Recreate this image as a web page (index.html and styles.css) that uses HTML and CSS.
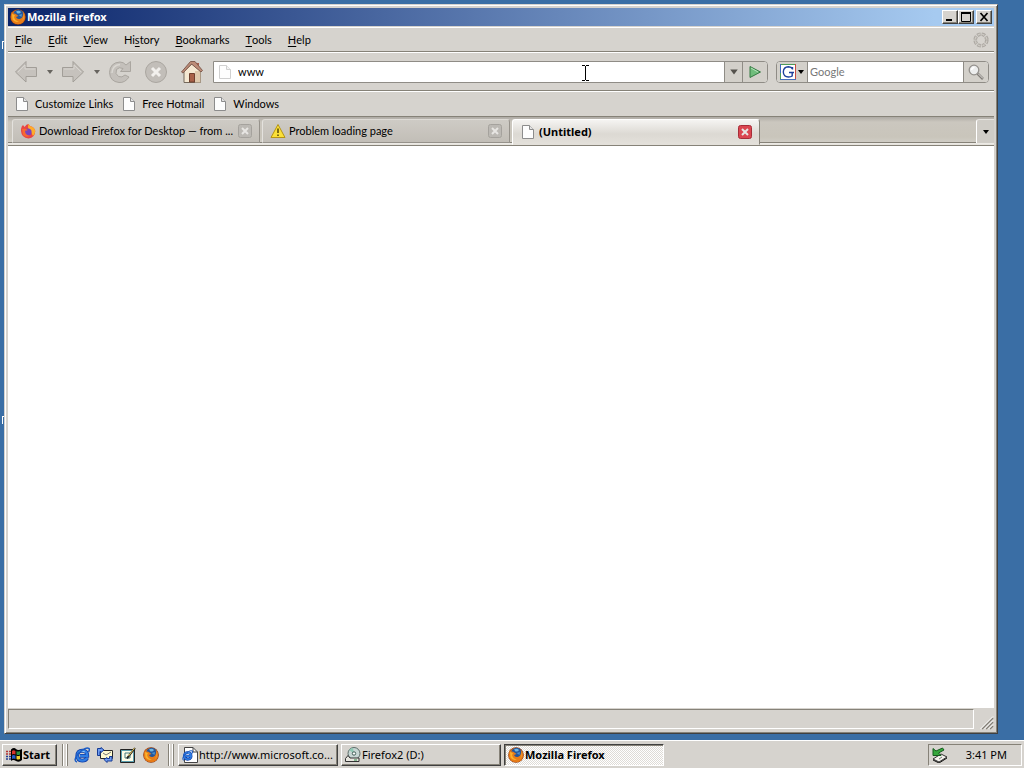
FILE: index.html
```html
<!DOCTYPE html>
<html lang="en">
<head>
    <meta charset="UTF-8">
    <meta name="viewport" content="width=device-width, initial-scale=1.0">
    <title>Mozilla Firefox</title>
    <link rel="stylesheet" href="styles.css">
</head>
<body>
    <!-- shared icons -->
    <svg class="defs" aria-hidden="true">
        <symbol id="firefox" viewBox="0 0 16 16">
            <circle cx="8" cy="8" r="7.8" fill="#8a3a10"/>
            <circle cx="8" cy="8" r="7.300" fill="#e0701a"/>
            <circle cx="8.6" cy="6.6" r="5.8" fill="#24569c"/>
            <path d="M6 2.500 Q9 1 11 3 Q10 5 7.500 4.500 Z" fill="#6fb6e0"/>
            <path d="M8.500 6 L12 5 L11.500 8 Z" fill="#4a92cc"/>
            <path d="M1.500 3 L3.500 4.500 Q5 4 6.500 5.500 L8.500 7 L6 8 Q7 10.500 9.500 10 Q12.500 9.500 13 6 Q13.500 4 12.500 2.500 Q15.500 5.500 15 9 Q13.500 15 8 15 Q2 14.500 1 9 Z" fill="#e67c18"/>
            <path d="M2 5 Q3.500 5 5 6.500 L4 8 Q5 12 9 12.500 Q5 14 2.500 10.500 Z" fill="#fbb22c"/>
            <path d="M13.500 5 Q15 9 11.500 12.500 Q14.500 9 13.500 5 Z" fill="#fde46a"/>
        </symbol>
        <symbol id="page" viewBox="0 0 16 16">
            <path d="M2.500 1.500 H9.500 L13.500 5.500 V14.500 H2.500 Z" fill="#fdfdfd" stroke="#8c8c8c"/>
            <path d="M9.500 1.500 V5.500 H13.500" fill="#e4e4e4" stroke="#8c8c8c"/>
        </symbol>
        <symbol id="ie" viewBox="0 0 16 16">
            <path d="M13.200 10.800 Q11.800 13.600 8.300 13.600 Q3.300 13.300 3.300 8.500 Q3.600 3.800 8.300 3.600 Q13.400 3.800 13.300 8.900 H6" fill="none" stroke="#123fa8" stroke-width="3.800"/>
            <path d="M13.200 10.800 Q11.800 13.600 8.300 13.600 Q3.300 13.300 3.300 8.500 Q3.600 3.800 8.300 3.600 Q13.400 3.800 13.300 8.900 H6" fill="none" stroke="#2f7ee4" stroke-width="2.200"/>
            <path d="M5 5 Q8 2.800 11 5" fill="none" stroke="#8ac8fb"/>
            <path d="M3 15 Q-1 14 3.500 7.500 Q11 -0.500 15 1.500 Q16 2.500 14.500 5" fill="none" stroke="#1c5cc4" stroke-width="1.500"/>
        </symbol>
        <symbol id="close" viewBox="0 0 14 14">
            <rect class="box" x="0.500" y="0.500" width="13" height="13" rx="2"/>
            <path class="cross" d="M4 4 L10 10 M10 4 L4 10"/>
        </symbol>
        <symbol id="down" viewBox="0 0 8 8">
            <path d="M1 2 H7 L4 6 Z" fill="currentColor"/>
        </symbol>
    </svg>

    <main class="desktop">
        <i class="shortcut-edge first"></i>
        <i class="shortcut-edge second"></i>

        <section class="window">
            <header class="titlebar">
                <svg class="icon"><use href="#firefox"/></svg>
                <h1>Mozilla Firefox</h1>
                <button class="win-btn" aria-label="Minimize"><svg viewBox="0 0 10 10"><path d="M1 8 H7" stroke="#000" stroke-width="2"/></svg></button>
                <button class="win-btn" aria-label="Maximize"><svg viewBox="0 0 10 10"><path d="M0.500 1 V9.500 H9.500 V1" fill="none" stroke="#000"/><path d="M0 1 H10" stroke="#000" stroke-width="2"/></svg></button>
                <button class="win-btn win-close" aria-label="Close"><svg viewBox="0 0 10 10"><path d="M1.500 1 L8.500 9 M8.500 1 L1.500 9" stroke="#000" stroke-width="1.700"/></svg></button>
            </header>

            <nav class="menubar">
                <button><u>F</u>ile</button>
                <button><u>E</u>dit</button>
                <button><u>V</u>iew</button>
                <button>Hi<u>s</u>tory</button>
                <button><u>B</u>ookmarks</button>
                <button><u>T</u>ools</button>
                <button><u>H</u>elp</button>
                <svg class="throbber" viewBox="0 0 16 16"><circle cx="8" cy="8" r="5.800" fill="none" stroke="#aaa6a0" stroke-width="3.600" stroke-dasharray="3.400 1.155"/><circle cx="8" cy="8" r="5.800" fill="none" stroke="#ccc8c2" stroke-width="1.600" stroke-dasharray="2.400 2.155" stroke-dashoffset="-0.500"/></svg>
            </nav>

            <div class="toolbar">
                <button class="tool" aria-label="Back"><svg viewBox="0 0 24 24"><path d="M1.500 12 L12 1.500 V7.500 H22.500 V16.500 H12 V22 Z" fill="#c6c2bd" stroke="#a29e98"/><path d="M4 12 L11 5 V9 H21" fill="none" stroke="#d8d5d0"/></svg></button>
                <button class="history" aria-label="Back history"><svg><use href="#down"/></svg></button>
                <button class="tool" aria-label="Forward"><svg viewBox="0 0 24 24"><path d="M22.500 12 L12 1.500 V7.500 H1.500 V16.500 H12 V22 Z" fill="#c6c2bd" stroke="#a29e98"/><path d="M3 9 H13 V5 L20 12" fill="none" stroke="#d8d5d0"/></svg></button>
                <button class="history" aria-label="Forward history"><svg><use href="#down"/></svg></button>
                <button class="tool" aria-label="Reload"><svg viewBox="0 0 24 24"><path d="M18 5 L22.500 1.500 V11.500 H12.500 L15 8.500 Q11 6.500 8.500 9.500 Q6.500 14 10.500 16.500 Q14 18 17 15 L21 17 Q17 23 11 22.500 Q2 21.500 1.500 12.500 Q2 2.500 12 2 Q15.500 2 18 5 Z" fill="#c4c0bb" stroke="#aaa6a0"/><path d="M4 13 Q4.500 5 12 4.500" fill="none" stroke="#dad7d2" stroke-width="1.500"/></svg></button>
                <button class="tool stop" aria-label="Stop"><svg viewBox="0 0 24 24"><circle cx="12" cy="12" r="10.500" fill="#c2beb9" stroke="#aaa6a0"/><path d="M8 8 L16 16 M16 8 L8 16" stroke="#f2f0ed" stroke-width="3"/></svg></button>
                <button class="tool home" aria-label="Home"><svg viewBox="0 0 24 24"><path d="M16 3 H19 V8 H16 Z" fill="#a86050"/><path d="M4 11 L12 4 L20.500 11 V22.500 H4 Z" fill="#f5e8d2" stroke="#75695c"/><path d="M15 11 H20.500 V22.500 H15 Z" fill="#dfc9ad"/><path d="M9.500 13.500 H14.500 V22 H9.500 Z" fill="#a86048" stroke="#70402f"/><path d="M1.500 12 L10.500 1.500 H15 L22.500 10.500 L21 12 L11.500 4 L3 13 Z" fill="#bd8c78" stroke="#805d50"/></svg></button>

                <form class="location">
                    <svg class="icon faded"><use href="#page"/></svg>
                    <input type="text" value="www" aria-label="Location">
                    <button type="button" class="drop" aria-label="Show history"><svg><use href="#down"/></svg></button>
                    <button type="button" class="go" aria-label="Go"><svg viewBox="0 0 14 14"><path d="M2 1.500 L12.500 7 L2 12.500 Z" fill="#70bd7c" stroke="#347a42"/><path d="M3 3 L10 7" stroke="#b4e2ba"/></svg></button>
                </form>

                <form class="search">
                    <button type="button" class="engine" aria-label="Search engine">
                        <svg class="google" viewBox="0 0 16 16"><path d="M0 0 H16 V16 H0 Z" fill="#fff"/><path d="M0 .5 H16" stroke="#4c9c58"/><path d="M.5 0 V9" stroke="#3c66bc"/><path d="M.5 9 V16" stroke="#4c9c58"/><path d="M15.500 0 V16" stroke="#c84c42"/><path d="M0 15.500 H16" stroke="#456fbc"/><path d="M12.500 5.500 V3 M12.500 5 Q11.500 2.800 8.500 2.800 Q3.500 3 3.300 8 Q3.600 13 8.500 13 Q11 13 12.200 12 V8.800 M9 8.500 H14" fill="none" stroke="#1c3f9c" stroke-width="1.400"/></svg>
                        <svg class="arrow"><use href="#down"/></svg>
                    </button>
                    <input type="text" placeholder="Google" aria-label="Search">
                    <button type="button" class="find" aria-label="Search"><svg viewBox="0 0 16 16"><path d="M9.500 9.500 L15 15" stroke="#817d78" stroke-width="2.600"/><path d="M10 9.500 L15 14.500" stroke="#e3e1de"/><circle cx="6" cy="6" r="4.800" fill="#eceded" stroke="#94918d" stroke-width="1.300"/><path d="M3.500 6 Q4 3.500 6.500 3.500" fill="none" stroke="#fff" stroke-width="1.500"/></svg></button>
                </form>
            </div>

            <nav class="bookmarks">
                <a href="#"><svg class="icon"><use href="#page"/></svg>Customize Links</a>
                <a href="#"><svg class="icon"><use href="#page"/></svg>Free Hotmail</a>
                <a href="#"><svg class="icon"><use href="#page"/></svg>Windows</a>
            </nav>

            <div class="tabs">
                <div class="tab">
                    <button class="tab-label">
                        <svg class="icon" viewBox="0 0 16 16"><path d="M1 6 Q1.500 3 3 2 L4.500 4 Q6.500 1 8.500 1 L10 3 Q14.500 4 15.300 8 Q15 15 8.500 15.500 Q1.500 15 1 8 Z" fill="#e94644"/><path d="M8.500 1 L10 3 Q14.500 4 15.300 8 Q15 11 13 13 L10 7 Q7 6 8.500 1 Z" fill="#ffac2a"/><circle cx="8" cy="9" r="3.600" fill="#7944bc"/><path d="M2 6 Q5 5 8 7 Q6 8 5 7.500 Q5 12 10 13 Q6 15 3 12 Z" fill="#f8692f"/></svg>
                        <span>Download Firefox for Desktop — from ...</span>
                    </button>
                    <button class="tab-close" aria-label="Close tab"><svg><use href="#close"/></svg></button>
                </div>
                <div class="tab">
                    <button class="tab-label">
                        <svg class="icon" viewBox="0 0 16 16"><path d="M8 1.500 L15 14.500 H1 Z" fill="#fbe038" stroke="#b59414" stroke-linejoin="round"/><path d="M8 5.500 V10 M8 11.500 V13" stroke="#473900" stroke-width="1.400"/></svg>
                        <span>Problem loading page</span>
                    </button>
                    <button class="tab-close" aria-label="Close tab"><svg><use href="#close"/></svg></button>
                </div>
                <div class="tab active">
                    <button class="tab-label">
                        <svg class="icon"><use href="#page"/></svg>
                        <span>(Untitled)</span>
                    </button>
                    <button class="tab-close" aria-label="Close tab"><svg><use href="#close"/></svg></button>
                </div>
                <button class="all-tabs" aria-label="List all tabs"><svg><use href="#down"/></svg></button>
            </div>

            <div class="content"></div>

            <footer class="statusbar">
                <div class="status"></div>
                <svg class="grip" viewBox="0 0 14 14"><path d="M2 13 L13 2 M6 13 L13 6 M10 13 L13 10" stroke="#858178" stroke-width="1.500"/><path d="M0.500 13 L13 0.500 M4.500 13 L13 4.500 M8.500 13 L13 8.500" stroke="#fff"/></svg>
            </footer>
        </section>

        <svg class="cursor" viewBox="0 0 7 16"><path d="M0 .5 H3 M4 .5 H7 M3.500 1 V15 M0 15.500 H3 M4 15.500 H7" stroke="#000"/></svg>
    </main>

    <footer class="taskbar">
        <button class="start">
            <svg class="icon" viewBox="0 0 16 16"><path d="M5 2.500 Q8 0 10 2 T16 2 V13 Q13 16 10 14 T5 14 Z" fill="#000"/><path d="M6 4 Q7.500 2.500 9.500 4 V7.500 Q7.500 6.500 6 7.500 Z" fill="#d6342b"/><path d="M10.500 4 Q12 5 14 4 V7.500 Q12 8.500 10.500 7.500 Z" fill="#2a9144"/><path d="M6 8.500 Q7.500 7.500 9.500 8.500 V12 Q7.500 11 6 12 Z" fill="#245cc8"/><path d="M10.500 8.500 Q12 9.500 14 8.500 V12 Q12 13 10.500 12 Z" fill="#f0cf32"/><path d="M0 4.500 H2 M3 4.500 H5 M0 7 H2 M3 7 H5" stroke="#b23332" stroke-width="1.500"/><path d="M0 9.500 H2 M3 9.500 H5 M0 12 H2 M3 12 H5" stroke="#263f93" stroke-width="1.500"/></svg>
            Start
        </button>
        <div class="quick-launch">
            <button aria-label="Internet Explorer"><svg><use href="#ie"/></svg></button>
            <button aria-label="Outlook Express"><svg viewBox="0 0 16 16"><path d="M3.500 3.500 H15.500 V11.500 H3.500 Z" fill="#fffbd0" stroke="#282828"/><path d="M6 6 L9 8 L14 5" fill="none" stroke="#777"/><path d="M0.500 1.500 H4 V0.500 L7 3 L4 5.500 V4.500 H3 V8.500 H0.500 Z" fill="#6f9cf0" stroke="#173c96"/><path d="M15 9.500 V14 H10 V15.500 L7 12.500 L10 10.500 V11.500 H12.500 V9.500 Z" fill="#6f9cf0" stroke="#173c96"/></svg></button>
            <button aria-label="Show Desktop"><svg viewBox="0 0 16 16"><path d="M.5 2.500 H14.500 V15.500 H.5 Z" fill="#5b9eae" stroke="#222"/><path d="M2 4 H13 V14 H2 Z" fill="#fffde8"/><path d="M5 6 H10 V11 H5 Z" fill="none" stroke="#477d82"/><path d="M15 1 L8 10 L7 11.500" fill="none" stroke="#222" stroke-width="2"/><path d="M14.500 1 L8.500 9" stroke="#e5c758"/></svg></button>
            <button aria-label="Firefox"><svg><use href="#firefox"/></svg></button>
        </div>
        <div class="tasks">
            <button class="task">
                <svg class="icon" viewBox="0 0 16 16"><path d="M2.500 .5 H11 L15.500 5 V15.500 H2.500 Z" fill="#fff" stroke="#444"/><path d="M11 .5 V5 H15.500" fill="none" stroke="#444"/><use href="#ie" x="0" y="3" width="11" height="11"/></svg>
                <span>http://www.microsoft.co...</span>
            </button>
            <button class="task">
                <svg class="icon" viewBox="0 0 16 16"><circle cx="9" cy="6.500" r="6" fill="#c7d6d3" stroke="#5b6c68"/><path d="M9 6.500 L4 3 Q6 1 8 1 Z" fill="#8fc9b4"/><circle cx="9" cy="6.500" r="1.700" fill="#fff" stroke="#3d5d55"/><path d="M.5 11.500 L3 8.500 L5 11 H14 V14.500 H.5 Z" fill="#e8e6df" stroke="#333"/><path d="M9 13 H12" stroke="#2a8a48"/></svg>
                <span>Firefox2 (D:)</span>
            </button>
            <button class="task current">
                <svg class="icon"><use href="#firefox"/></svg>
                <span>Mozilla Firefox</span>
            </button>
        </div>
        <div class="tray">
            <svg class="icon" viewBox="0 0 16 16"><path d="M1 12 L9 7 L15 10 L7 15 Z" fill="#f3f2ed" stroke="#333"/><path d="M1 13 L7 16 L15 11" fill="none" stroke="#111"/><path d="M7 12 L10 10" stroke="#777"/><path d="M1 1.500 V8.500 H9 L6.500 6 L12 3 L10.500 1 L4 4 Z" fill="#35a83c" stroke="#145b1d"/></svg>
            <time>3:41 PM</time>
        </div>
    </footer>
</body>
</html>
```
FILE: styles.css
```css
* {
    box-sizing: border-box;
}
body {
    margin: 0;
    height: 100vh;
    display: flex;
    flex-direction: column;
    overflow: hidden;
    background-color: #3a6ea5;
    color: #000;
    font-family: Lato, "Liberation Sans", sans-serif;
    font-size: 11px;
    line-height: 14px;
}
button, input {
    font: inherit;
    color: inherit;
    margin: 0;
    padding: 0;
    border: 0;
    background: none;
}
button {
    display: flex;
    align-items: center;
    justify-content: center;
}
input {
    outline: none;
    min-width: 0;
}
svg {
    display: block;
    flex-shrink: 0;
}
.defs {
    position: absolute;
    width: 0;
    height: 0;
}
.icon {
    width: 16px;
    height: 16px;
}

/* desktop and window */
.desktop {
    position: relative;
    flex: 1;
    min-height: 0;
    display: flex;
    padding: 4px 26px 6px 4px;
}
.shortcut-edge {
    position: absolute;
    left: 2px;
    width: 2px;
    height: 8px;
    border-left: 1px solid #fff;
    border-top: 1px solid #fff;
}
.first {
    top: 41px;
}
.second {
    top: 416px;
}
.window {
    flex: 1;
    min-width: 0;
    display: flex;
    flex-direction: column;
    padding: 3px;
    background-color: #d6d3ce;
    border: 1px solid;
    border-color: #d6d3ce #404040 #404040 #d6d3ce;
    box-shadow: inset 1px 1px #fff, inset -1px -1px #868278;
}
.titlebar {
    height: 18px;
    display: flex;
    align-items: center;
    padding: 0 2px;
    background: linear-gradient(to right, #0a246a, #a6caf0 94%);
    color: #fff;
}
.titlebar h1 {
    flex: 1;
    margin: 0;
    padding-left: 1px;
    font-size: 11px;
}
.titlebar h1, .tab.active, .start, .task.current {
    font-family: "Noto Sans", "Liberation Sans", sans-serif;
    font-weight: bold;
}
.win-btn {
    width: 16px;
    height: 14px;
    background-color: #d6d3ce;
    border: 1px solid;
    border-color: #fff #404040 #404040 #fff;
    box-shadow: inset -1px -1px #868278;
}
.win-btn svg {
    width: 10px;
    height: 10px;
}
.win-close {
    margin-left: 2px;
}
.menubar {
    height: 25px;
    display: flex;
    align-items: center;
    gap: 16px;
    margin-top: 1px;
    padding: 0 5px 0 7px;
    border-top: 1px solid #fff;
    border-bottom: 1px solid #868278;
}
.menubar u {
    text-underline-offset: 2px;
}
.throbber {
    width: 16px;
    height: 16px;
    margin-left: auto;
}

/* navigation toolbar */
.toolbar {
    height: 39px;
    display: flex;
    align-items: center;
    padding: 0 5px 0 6px;
    border-top: 1px solid #fff;
    border-bottom: 1px solid #868278;
}
.tool {
    width: 24px;
    height: 24px;
}
.tool svg {
    width: 24px;
    height: 24px;
}
.history {
    width: 23px;
    height: 22px;
    color: #67645f;
}
.history svg, .drop svg, .arrow, .all-tabs svg {
    width: 8px;
    height: 8px;
}
.stop, .home {
    margin-left: 12px;
}
.location, .search {
    display: flex;
    height: 22px;
    border: 1px solid #8f8c86;
    border-radius: 0 4px 4px 0;
    background-color: #fff;
    overflow: hidden;
}
.location {
    flex: 1;
    margin-left: 9px;
    align-items: center;
}
.location .icon {
    margin: 0 5px 0 3px;
}
.faded {
    opacity: 0.4;
}
.location input {
    flex: 1;
    height: 20px;
}
.drop, .go, .find, .engine {
    height: 20px;
    background-color: #d3d0ca;
    border-left: 1px solid #8f8c86;
}
.drop {
    width: 18px;
    color: #55524d;
}
.drop svg {
    width: 10px;
    height: 10px;
}
.go {
    width: 25px;
}
.go svg {
    width: 14px;
    height: 14px;
}
.search {
    width: 213px;
    margin-left: 8px;
    border-radius: 4px;
}
.engine {
    width: 31px;
    gap: 1px;
    border-left: 0;
    border-right: 1px solid #8f8c86;
}
.google {
    width: 16px;
    height: 16px;
}
.search input {
    flex: 1;
    padding-left: 2px;
}
.search input::placeholder {
    color: #777;
    opacity: 1;
}
.find {
    width: 25px;
}
.find svg {
    width: 16px;
    height: 16px;
}

/* bookmarks */
.bookmarks {
    height: 26px;
    display: flex;
    align-items: center;
    gap: 8px;
    padding: 0 6px;
    border-top: 1px solid #fff;
    border-bottom: 1px solid #868278;
}
.bookmarks a {
    display: flex;
    align-items: center;
    gap: 5px;
    color: inherit;
    text-decoration: none;
}

/* tabs */
.tabs {
    height: 29px;
    display: flex;
    align-items: flex-start;
    gap: 2px;
    padding: 2px 0 0 4px;
    background: linear-gradient(#aeaaa4, #cbc7bf 5px, #c9c5bb 20px, #d0cdc5 25px, #868278 25px, #868278 26px, #efede9 26px, #e3e0da 28px, #868278 28px);
}
.tab {
    flex: 0 1 248px;
    min-width: 0;
    height: 24px;
    display: flex;
    align-items: center;
    padding: 0 7px;
    border: 1px solid #96928b;
    border-top-color: #dedbd6;
    border-left-color: #e4e2de;
    border-radius: 3px 3px 0 0;
    background: linear-gradient(#cecbc5, #c2beb7);
}
.tab-label {
    flex: 1;
    min-width: 0;
    height: 22px;
    justify-content: flex-start;
    gap: 3px;
}
.tab-label span, .task span {
    overflow: hidden;
    text-overflow: ellipsis;
    white-space: nowrap;
}
.tab-close {
    width: 14px;
    height: 14px;
}
.tab-close svg {
    width: 14px;
    height: 14px;
    fill: #bcb9b4;
    stroke: #a5a29d;
}
.cross {
    stroke: #e8e6e3;
    stroke-width: 2px;
}
.tab.active {
    height: 26px;
    border-color: #fff #868278 #e3e0da #fff;
    background: linear-gradient(#f5f4f2, #dcd9d3 14px, #e3e0da);
}
.tab.active .tab-close svg {
    fill: #db4650;
    stroke: #a62d38;
}
.all-tabs {
    width: 18px;
    height: 24px;
    margin-left: auto;
    border-left: 1px solid #fff;
    border-top: 1px solid #e4e2de;
    border-radius: 3px 0 0 0;
    background-color: #cfccc6;
}

.content {
    flex: 1;
    background-color: #fff;
}
.statusbar {
    height: 22px;
    display: flex;
    align-items: flex-end;
}
.status {
    flex: 1;
    height: 20px;
    margin-bottom: 1px;
    border: 1px solid;
    border-color: #868278 #fff #fff #868278;
}
.grip {
    width: 14px;
    height: 14px;
    margin-left: 6px;
}
.cursor {
    position: absolute;
    left: 582px;
    top: 65px;
    width: 7px;
    height: 16px;
}

/* taskbar */
.taskbar {
    height: 28px;
    display: flex;
    align-items: center;
    padding: 2px;
    background-color: #d6d3ce;
    border-top: 1px solid #fff;
}
.start, .task {
    height: 22px;
    justify-content: flex-start;
    border: 1px solid;
    border-color: #fff #404040 #404040 #fff;
    box-shadow: inset -1px -1px #868278;
}
.start {
    width: 55px;
    padding-left: 3px;
    gap: 1px;
}
.quick-launch {
    display: flex;
    height: 22px;
    align-items: center;
    gap: 7px;
    margin: 0 9px 0 5px;
    padding-left: 11px;
}
.quick-launch, .tasks {
    border-left: 1px solid #868278;
    box-shadow: inset 1px 0 #fff, inset 3px 0 #d6d3ce, inset 4px 0 #fff, inset 5px 0 #868278;
}
.quick-launch svg {
    width: 16px;
    height: 16px;
}
.tasks {
    flex: 1;
    min-width: 0;
    display: flex;
    gap: 3px;
    padding-left: 9px;
}
.task {
    flex: 0 1 160px;
    min-width: 0;
    padding: 0 2px 0 3px;
    gap: 1px;
}
/* taskbar labels run a little wider than the rest */
.task, .tray {
    font-family: "Noto Sans", "Liberation Sans", sans-serif;
}
.task.current {
    border-color: #404040 #fff #fff #404040;
    box-shadow: inset 1px 1px #868278;
    background: repeating-conic-gradient(#fff 0 25%, #dedbd6 0 50%) 0 0 / 2px 2px;
}
.tray {
    height: 22px;
    width: 94px;
    display: flex;
    align-items: center;
    justify-content: space-between;
    padding: 0 14px 0 3px;
    border: 1px solid;
    border-color: #868278 #fff #fff #868278;
}
```
